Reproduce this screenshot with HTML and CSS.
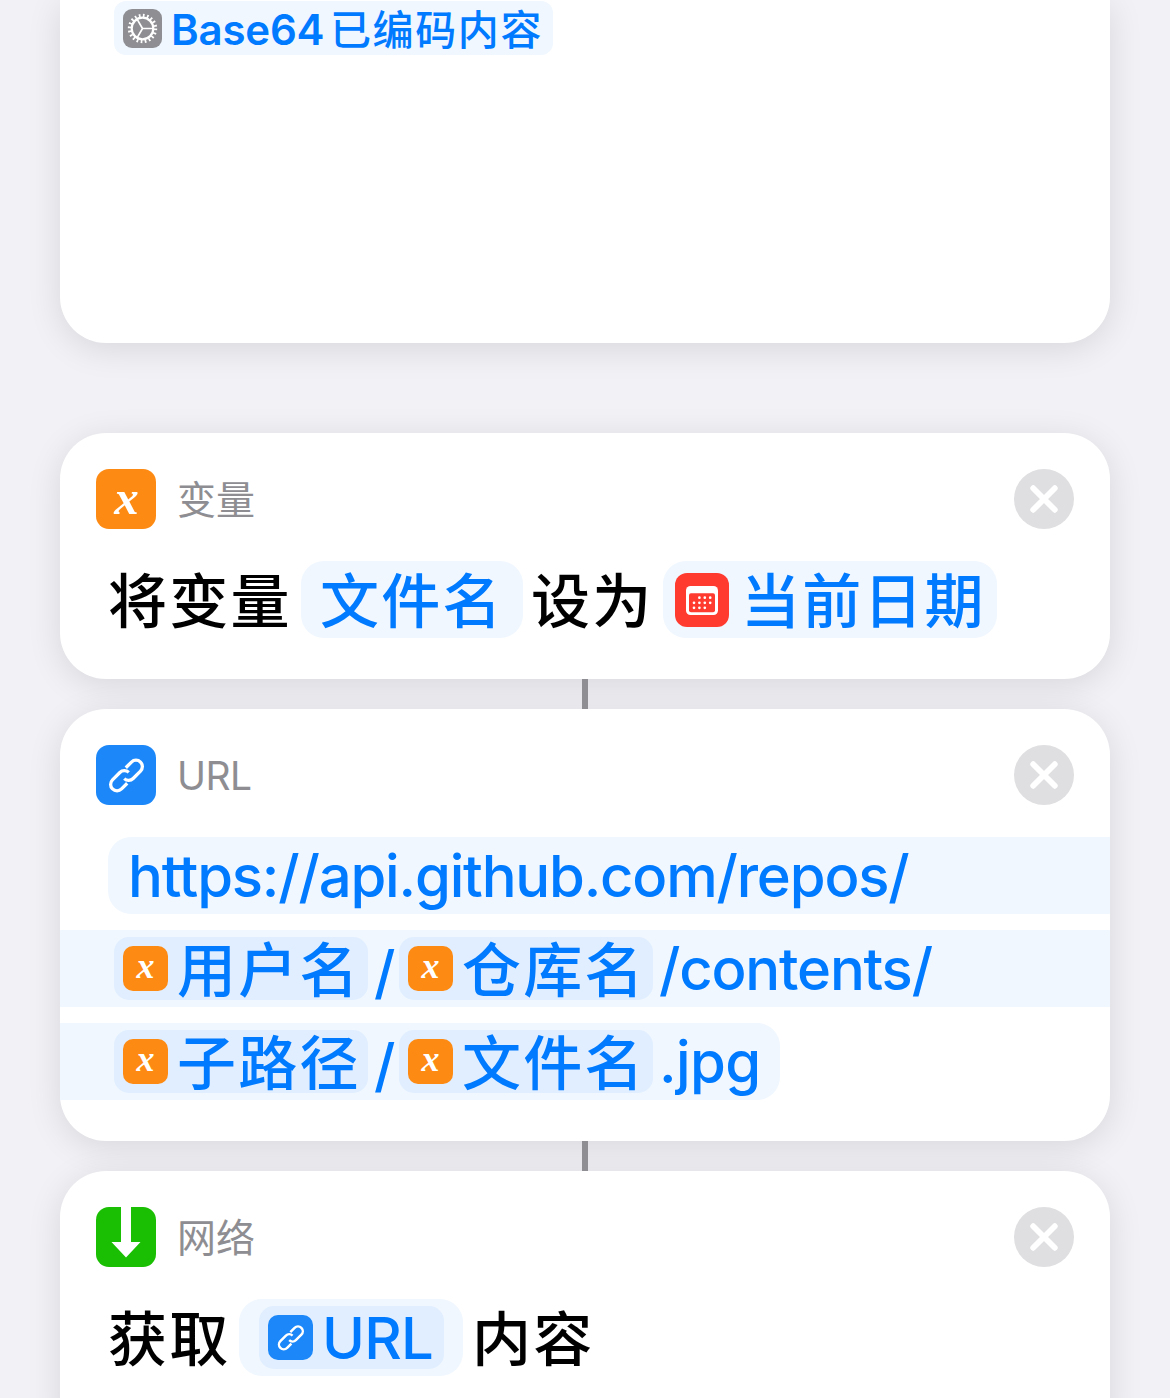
FILE: index.html
```html
<!DOCTYPE html>
<html lang="zh-CN">
<head>
<meta charset="utf-8">
<title>快捷指令</title>
<link rel="stylesheet" href="styles.css">
</head>
<body>
<svg class="defs" width="0" height="0">
  <symbol id="link" viewBox="0 0 60 60">
    <g transform="translate(30.5 30.5) rotate(-45)" fill="none" stroke="#fff" stroke-width="3.3">
      <path d="M5 -6H13A6.4 6.4 0 0 1 13 6.8H2.6A6.4 6.4 0 0 1 -3.8 0.6"/>
      <path d="M-5 6H-13A6.4 6.4 0 0 1 -13 -6.8H-2.6A6.4 6.4 0 0 1 3.8 -0.6"/>
    </g>
  </symbol>
  <symbol id="close" viewBox="0 0 60 60">
    <circle cx="30" cy="30" r="30" fill="#dfdfe1"/>
    <path d="M19.2 19.2 40.8 40.8M40.8 19.2 19.2 40.8" stroke="#fff" stroke-width="5.8" stroke-linecap="round"/>
  </symbol>
</svg>
<main class="flow">
  <section class="card card-text">
    <div class="token token-small">
      <svg class="gear" viewBox="0 0 39 39">
        <rect width="39" height="39" rx="9" fill="#8e8e93"/>
        <g fill="none" stroke="#fff">
          <circle cx="19.5" cy="19.5" r="10.8" stroke-width="2.2"/>
          <circle cx="19.5" cy="19.5" r="13" stroke-width="3.4" stroke-dasharray="1.7 2.384"/>
          <path d="M19.5 19.5H30M19.5 19.5 14.2 10.3M19.5 19.5 14.2 28.7" stroke-width="1.7"/>
        </g>
      </svg>
      <span class="latin-small">Base64</span><span class="cjk-small">已编码内容</span>
    </div>
  </section>

  <section class="card card-variable">
    <header class="head">
      <span class="icon icon-x">x</span>
      <h2 class="title">变量</h2>
      <svg class="close"><use href="#close"/></svg>
    </header>
    <div class="row">
      <span class="cjk lead">将变量</span>
      <span class="pill pill-name"><span class="cjk">文件名</span></span>
      <span class="cjk set-to">设为</span>
      <span class="pill pill-date">
        <svg class="calendar" viewBox="0 0 54 54">
          <rect width="54" height="54" rx="12" fill="#ff3b30"/>
          <rect x="11" y="13" width="32" height="29" rx="4.5" fill="#fff"/>
          <rect x="14" y="20.3" width="26" height="19" rx="2" fill="#ff3b30"/>
          <g stroke="#fff" stroke-width="2.7" stroke-linecap="round">
            <path d="M24.4 24.7h0M29.8 24.7h0M35.2 24.7h0M19 29.8h0M24.4 29.8h0M29.8 29.8h0M35.2 29.8h0M19 34.8h0M24.4 34.8h0M29.8 34.8h0"/>
          </g>
        </svg>
        <span class="cjk">当前日期</span>
      </span>
    </div>
  </section>
  <div class="connector"></div>

  <section class="card card-url">
    <header class="head">
      <svg class="icon icon-link"><use href="#link"/></svg>
      <h2 class="title title-latin">URL</h2>
      <svg class="close"><use href="#close"/></svg>
    </header>
    <div class="address">
      <div class="line line-first"><span class="latin">https://api.github.com/repos/</span></div>
      <div class="line line-middle">
        <span class="token"><span class="mini mini-x">x</span><span class="cjk">用户名</span></span>
        <span class="latin slash">/</span>
        <span class="token"><span class="mini mini-x">x</span><span class="cjk">仓库名</span></span>
        <span class="latin tail">/contents/</span>
      </div>
      <div class="line line-last">
        <span class="token"><span class="mini mini-x">x</span><span class="cjk">子路径</span></span>
        <span class="latin slash">/</span>
        <span class="token"><span class="mini mini-x">x</span><span class="cjk">文件名</span></span>
        <span class="latin tail tail-ext">.jpg</span>
      </div>
    </div>
  </section>
  <div class="connector"></div>

  <section class="card card-network">
    <header class="head">
      <svg class="icon icon-down" viewBox="0 0 60 60"><path d="M25 0H35V35H44.5L30 50.5 15.5 35H25Z" fill="#fff"/></svg>
      <h2 class="title">网络</h2>
      <svg class="close"><use href="#close"/></svg>
    </header>
    <div class="row">
      <span class="cjk lead lead-get">获取</span>
      <span class="pill pill-url">
        <span class="token token-url"><svg class="mini mini-link"><use href="#link"/></svg><span class="latin latin-url">URL</span></span>
      </span>
      <span class="cjk contents">内容</span>
    </div>
  </section>
</main>
</body>
</html>
```
FILE: styles.css
```css
* { box-sizing: border-box; }

body {
  margin: 0;
  height: 1398px;
  overflow: hidden;
  background: #f2f1f6;
  font-family: Inter, "Noto Sans CJK SC", sans-serif;
  color: #000;
}

.defs { display: block; }

.flow {
  display: flex;
  flex-direction: column;
  align-items: center;
}

.card {
  display: flow-root;
  flex: none;
  width: 1050px;
  border-radius: 46px;
  background: #fff;
  box-shadow: 0 6px 34px rgba(0, 0, 0, 0.11);
}

.card-text {
  height: 343px;
  margin-bottom: 90px;
  padding: 1px 0 0 54px;
  border-radius: 0 0 46px 46px;
}
.card-variable { height: 246px; }
.card-url { height: 432px; }
.card-network { height: 280px; }

.connector {
  flex: none;
  width: 6px;
  height: 30px;
  background: #8e8e93;
  z-index: 1;
}

.head {
  display: flex;
  align-items: center;
  height: 60px;
  margin: 36px 36px 32px;
}

.icon {
  flex: none;
  width: 60px;
  height: 60px;
  border-radius: 13px;
}
.icon-x, .mini-x {
  background: #fd8a13;
  color: #fff;
  font-family: "Liberation Serif", serif;
  font-style: italic;
  font-weight: 700;
  text-align: center;
}
.icon-x { padding-left: 1px; font-size: 49px; line-height: 57px; }
.icon-link, .mini-link { background: #1b87f8; }
.icon-down { background: #1abe03; }

.title {
  margin: 0 0 0 21px;
  padding-top: 1px;
  font-size: 39px;
  font-weight: 400;
  line-height: 60px;
  color: #8e8e92;
}
.title-latin { letter-spacing: -0.6px; }

.close {
  width: 60px;
  height: 60px;
  margin-left: auto;
}

.row {
  display: flex;
  align-items: center;
  height: 77px;
  padding-left: 48px;
}

.cjk {
  flex: none;
  padding-bottom: 5px;
  font-family: "Noto Sans CJK SC", sans-serif;
  font-size: 59px;
  font-weight: 500;
  letter-spacing: 2.2px;
  line-height: 77px;
  white-space: nowrap;
}
.latin {
  flex: none;
  padding-top: 2px;
  font-size: 58px;
  font-weight: 500;
  letter-spacing: -1.2px;
  line-height: 77px;
  white-space: nowrap;
}

.lead { width: 184px; margin-right: 9px; }
.lead-get { width: 123px; margin-right: 8px; }

.pill {
  display: flex;
  flex: none;
  align-items: center;
  height: 77px;
  border-radius: 23px;
  background: #f0f7ff;
  color: #007aff;
}
.pill-name { width: 222px; padding-left: 19px; }
.set-to { width: 132px; margin-left: 8px; }
.pill-date { width: 334px; padding-left: 12px; }
.calendar { width: 54px; height: 54px; margin-right: 12px; }
.pill-url { width: 224px; padding-left: 20px; }
.contents { margin-left: 9px; }

.token {
  display: flex;
  flex: none;
  align-items: center;
  width: 254px;
  height: 63px;
  padding-left: 9px;
  border-radius: 15px;
  background: #e0eeff;
}
.mini {
  flex: none;
  width: 45px;
  height: 45px;
  margin-right: 9px;
  border-radius: 10px;
}
.mini-x { font-size: 36px; line-height: 41px; }
.token-url { width: 185px; }
.latin-url { letter-spacing: -0.8px; }

.address {
  display: flex;
  flex-direction: column;
  gap: 16px;
  color: #007aff;
}
.line {
  display: flex;
  align-items: center;
  height: 77px;
  background: #f0f7ff;
}
.line-first {
  margin-left: 48px;
  padding-left: 20px;
  border-radius: 23px 0 0 23px;
}
.line-middle, .line-last { padding-left: 54px; }
.line-last { width: 720px; border-radius: 0 23px 23px 0; }
.slash { width: 31px; padding-top: 7px; padding-left: 6px; }
.tail { padding-left: 6px; }
.tail-ext { letter-spacing: -0.6px; }

.token-small {
  width: 439px;
  height: 54px;
  border-radius: 12px;
  background: #f0f7ff;
  color: #007aff;
}
.gear { width: 39px; height: 39px; margin-right: 9px; }
.latin-small {
  width: 159px;
  padding-top: 3px;
  font-size: 42px;
  font-weight: 600;
  letter-spacing: -0.2px;
  line-height: 50px;
}
.cjk-small {
  padding-bottom: 2px;
  font-family: "Noto Sans CJK SC", sans-serif;
  font-size: 41px;
  font-weight: 500;
  letter-spacing: 1.6px;
  line-height: 50px;
  white-space: nowrap;
}
```
